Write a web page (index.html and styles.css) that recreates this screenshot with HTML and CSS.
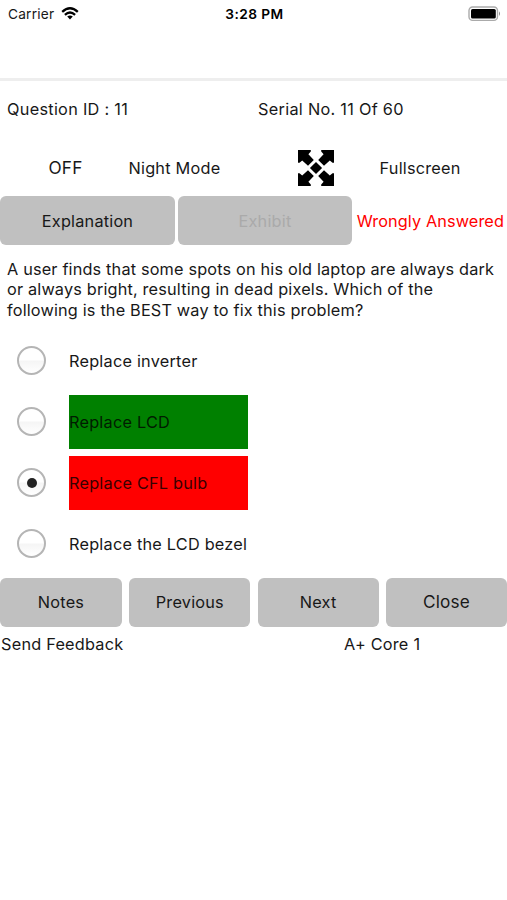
FILE: index.html
```html
<!DOCTYPE html>
<html lang="en">
<head>
<meta charset="utf-8">
<meta name="viewport" content="width=device-width, initial-scale=1">
<title>Question 11</title>
<link rel="stylesheet" href="styles.css">
</head>
<body>
<div class="status">
  <div class="carrier"><span>Carrier</span>
    <svg class="wifi" width="18" height="13" viewBox="0 0 18 13" fill="none" stroke="#000" stroke-width="2.3"><path d="M1.2 4.8Q9-2.2 16.8 4.8"/><path d="M3.9 7.8Q9 3.2 14.1 7.8"/><path d="M9 12.4L6.2 9.6Q9 7.4 11.8 9.6Z" fill="#000" stroke="none"/></svg>
  </div>
  <span class="time">3:28 PM</span>
  <svg class="battery" width="33" height="16" viewBox="0 0 33 16"><rect x="1" y="1" width="28.5" height="13.4" rx="3.6" fill="#fff" stroke="#aaa" stroke-width="1.4"/><rect x="3" y="3" width="24.8" height="9.5" rx="1.6"/><path d="M31 5.3q2 2.4 0 4.8z" fill="#888"/></svg>
</div>
<header class="navbar"></header>
<main>
  <div class="info"><span>Question ID : 11</span><span>Serial No. 11 Of 60</span></div>
  <div class="modes">
    <span class="off">OFF</span><span>Night Mode</span>
    <svg class="expand" width="36" height="36" viewBox="0 0 36 36"><path d="M0 0h12.8v1.5L10.4 4.2l5.4 5.8-5.8 5.8-5.8-5.4-2.7 2.4H0z"/><path d="M36 0v12.8h-1.5l-2.7-2.4-5.8 5.4-5.8-5.8 5.4-5.8-2.4-2.7V0z"/><path d="M36 36H23.2v-1.5l2.4-2.7-5.4-5.8 5.8-5.8 5.8 5.4 2.7-2.4H36z"/><path d="M0 36V23.2h1.5l2.7 2.4 5.8-5.4 5.8 5.8-5.4 5.8 2.4 2.7V36z"/><path d="M18 11.9l6.1 6.1-6.1 6.1-6.1-6.1z"/></svg>
    <span>Fullscreen</span>
  </div>
  <div class="actions"><button class="btn">Explanation</button><button class="btn" disabled>Exhibit</button><span class="result">Wrongly Answered</span></div>
  <p class="question">A user finds that some spots on his old laptop are always dark<br>or always bright, resulting in dead pixels. Which of the<br>following is the BEST way to fix this problem?</p>
  <div class="options">
    <div class="option"><i class="radio"></i><span class="answer">Replace inverter</span></div>
    <div class="option"><i class="radio"></i><span class="answer right">Replace LCD</span></div>
    <div class="option"><i class="radio checked"></i><span class="answer wrong">Replace CFL bulb</span></div>
    <div class="option"><i class="radio"></i><span class="answer">Replace the LCD bezel</span></div>
  </div>
  <nav class="nav"><button class="btn">Notes</button><button class="btn">Previous</button><button class="btn">Next</button><button class="btn close">Close</button></nav>
  <footer class="footer"><span>Send Feedback</span><span>A+ Core 1</span></footer>
</main>
</body>
</html>
```
FILE: styles.css
```css
* { box-sizing: border-box; }
body { margin: 0; background: #fff; color: #181818; font: 16.3px/20.4px Inter, "Liberation Sans", sans-serif; letter-spacing: .22px; }
span { white-space: nowrap; }
.status { height: 28px; display: grid; grid-template-columns: 1fr auto 1fr; align-items: center; padding: 0 6px 0 8px; font-size: 13.7px; }
.carrier { display: flex; align-items: center; gap: 7px; }
.wifi { margin-top: -2px; }
.time { font-weight: 600; letter-spacing: .45px; color: #000; }
.battery { justify-self: end; margin-top: -1px; }
.navbar { height: 53px; border-bottom: 3px solid #eee; }
.info { height: 57px; display: grid; grid-template-columns: 251px 1fr; align-items: center; padding-left: 7px; letter-spacing: .28px; }
.modes { height: 58.4px; padding-top: 1px; display: grid; grid-template-columns: 80px 170px 81px 1fr; align-items: center; padding-left: 48.5px; letter-spacing: .22px; }
.modes span { padding-top: 1px; }
.modes .off { font-size: 17.2px; padding-top: 2px; }
.expand { margin-left: -.7px; }
.actions { height: 49px; display: grid; grid-template-columns: 175px 174px 1fr; column-gap: 3px; align-items: center; letter-spacing: .1px; }
.btn { height: 49px; padding: 0; border: 0; border-radius: 6px; background: #c0c0c0; color: #181818; font: inherit; letter-spacing: .2px; }
.actions .btn { padding-top: 1px; }
.btn:disabled { color: #aaa; }
.result { color: #f00; justify-self: end; margin-right: 3px; padding-top: 1px; }
.question { margin: 13.6px 0 0 7px; letter-spacing: .165px; }
.options { margin-top: 9.8px; }
.option { height: 61px; display: flex; align-items: center; padding-left: 17px; }
.radio { width: 29px; height: 29px; margin-right: 23px; border: 2px solid #b5b5b5; border-radius: 50%; background: linear-gradient(#fff 0 48%, #f5f5f5 52%, #fff); display: grid; place-items: center; }
.checked::after { content: ""; width: 10px; height: 10px; border-radius: 50%; background: #222; }
.answer { width: 179px; height: 54px; line-height: 54px; }
.right { background: #008000; color: #001c00; }
.wrong { background: #f00; color: #380000; }
.nav { margin-top: 3.7px; display: grid; grid-template-columns: 122px 121px 121px 121px; justify-content: space-between; }
.close { font-size: 17.2px; }
.footer { height: 35px; display: grid; grid-template-columns: 343px 1fr; align-items: center; padding-left: 1px; }
```
